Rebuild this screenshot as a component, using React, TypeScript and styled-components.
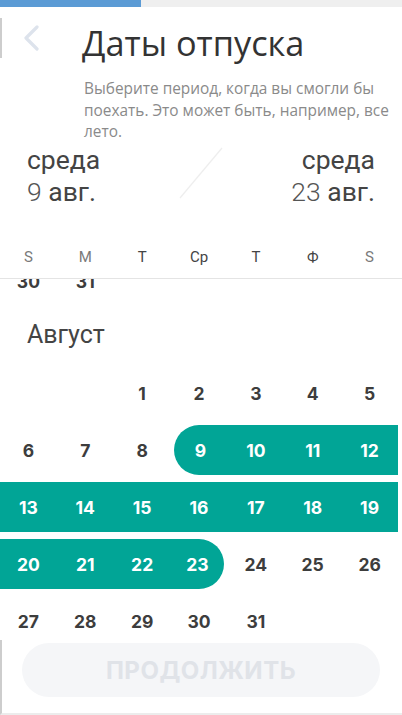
import React, { useLayoutEffect, useRef } from "react";
import styled, { createGlobalStyle, css } from "styled-components";

const GlobalStyle = createGlobalStyle`
  html, body { margin: 0; padding: 0; background: #fff; }
  body { font-family: "Roboto", "Noto Sans", sans-serif; }
  * { box-sizing: border-box; }
`;

const TEAL = "#01a596";

const Screen = styled.div`
  width: 402px;
  height: 715px;
  display: flex;
  flex-direction: column;
  overflow: hidden;
  background: #fff;
`;

const Progress = styled.div`
  height: 7px;
  background: #efefef;
  flex-shrink: 0;
`;

const ProgressFill = styled.div`
  height: 100%;
  background: #5b9bd5;
`;

const Header = styled.header`
  margin-top: 11px;
  height: 40px;
  display: flex;
  align-items: center;
  border-left: 2px solid #cdcdcd;
  flex-shrink: 0;
`;

const BackButton = styled.button`
  border: 0;
  background: none;
  padding: 0;
  margin: 0 0 0 19px;
  width: 20px;
  height: 26px;
  display: flex;
  align-items: center;
  justify-content: center;
  cursor: pointer;
`;

const Title = styled.h1`
  margin: 0 0 0 41px;
  font-family: "Open Sans", sans-serif;
  font-weight: 400;
  font-size: 34.3px;
  line-height: 40px;
  color: #333;
  position: relative;
  top: 5px;
  white-space: nowrap;
`;

const Subtitle = styled.p`
  margin: 20px 0 0 0;
  padding: 0 2px 0 84px;
  font-family: "Open Sans", sans-serif;
  font-size: 15.4px;
  line-height: 21.5px;
  color: #8a8a8a;
  flex-shrink: 0;
`;

const DateSummary = styled.div`
  margin-top: 1px;
  padding: 0 27px;
  display: grid;
  grid-template-columns: 1fr auto 1fr;
  align-items: center;
  flex-shrink: 0;
`;

const DateBlock = styled.div<{ $align: "left" | "right" }>`
  display: flex;
  flex-direction: column;
  align-items: ${(p) => (p.$align === "left" ? "flex-start" : "flex-end")};
`;

const DayName = styled.span`
  font-family: "Roboto", sans-serif;
  font-size: 26.5px;
  line-height: 32px;
  color: #444;
`;

const DateText = styled.span`
  font-family: "Roboto", sans-serif;
  font-size: 26.5px;
  line-height: 32px;
  color: #444;
`;

const DateNum = styled.span`
  font-weight: 300;
  color: #555;
`;

const Slash = styled.svg`
  margin-top: -6px;
`;

const WeekHeader = styled.div`
  margin-top: 28px;
  height: 43px;
  padding-right: 4px;
  display: grid;
  grid-template-columns: repeat(7, 1fr);
  align-items: center;
  border-bottom: 1px solid #e4e4e4;
  flex-shrink: 0;
`;

const WeekLabel = styled.span<{ $light?: boolean }>`
  text-align: center;
  font-family: "Roboto", sans-serif;
  font-size: 15px;
  color: ${(p) => (p.$light ? "#7a7a7a" : "#444")};
  padding-top: 1px;
`;

const Viewport = styled.div`
  flex: 1;
  overflow: hidden;
  padding-right: 4px;
`;

const MonthTitle = styled.h2`
  margin: 0;
  height: 55px;
  padding: 12px 0 0 27px;
  font-family: "Roboto", sans-serif;
  font-weight: 400;
  font-size: 25px;
  line-height: 26px;
  color: #444;
`;

const WeekRow = styled.div`
  display: grid;
  grid-template-columns: repeat(7, 1fr);
  height: 57px;
`;

const Cell = styled.div`
  display: flex;
  align-items: center;
`;

const Day = styled.span<{ $inRange: boolean; $start: boolean; $end: boolean }>`
  flex: 1;
  height: 50px;
  display: flex;
  align-items: center;
  justify-content: center;
  font-family: "Inter", sans-serif;
  font-weight: 700;
  font-size: 17.5px;
  color: #3d3d3d;
  ${(p) =>
    p.$inRange &&
    css`
      background: ${TEAL};
      color: #fff;
    `}
  ${(p) =>
    p.$start &&
    css`
      margin-left: 3px;
      border-top-left-radius: 25px;
      border-bottom-left-radius: 25px;
    `}
  ${(p) =>
    p.$end &&
    css`
      margin-right: 3px;
      border-top-right-radius: 25px;
      border-bottom-right-radius: 25px;
    `}
`;

const Footer = styled.footer`
  height: 75px;
  padding: 3px 22px 0 20px;
  border-left: 2px solid #cdcdcd;
  border-bottom: 2px solid #ececec;
  flex-shrink: 0;
  background: #fff;
`;

const ContinueButton = styled.button`
  width: 358px;
  height: 54px;
  border: 0;
  border-radius: 27px;
  background: #f5f6f8;
  color: #e0e3e8;
  font-family: "Inter", sans-serif;
  font-weight: 700;
  font-size: 24px;
  letter-spacing: 0.5px;
  cursor: default;
`;

type DayCell = number | null;

const weekdays: { label: string; light?: boolean }[] = [
  { label: "S", light: true },
  { label: "M", light: true },
  { label: "T" },
  { label: "Ср" },
  { label: "T" },
  { label: "Ф" },
  { label: "S", light: true },
];

const julyTail: DayCell[][] = [[30, 31, null, null, null, null, null]];

const august: DayCell[][] = [
  [null, null, 1, 2, 3, 4, 5],
  [6, 7, 8, 9, 10, 11, 12],
  [13, 14, 15, 16, 17, 18, 19],
  [20, 21, 22, 23, 24, 25, 26],
  [27, 28, 29, 30, 31, null, null],
];

const RANGE_START = 9;
const RANGE_END = 23;

function Week({ days, selectable }: { days: DayCell[]; selectable: boolean }) {
  return (
    <WeekRow>
      {days.map((d, i) => {
        const inRange = selectable && d !== null && d >= RANGE_START && d <= RANGE_END;
        return (
          <Cell key={i}>
            <Day
              $inRange={inRange}
              $start={inRange && d === RANGE_START}
              $end={inRange && d === RANGE_END}
            >
              {d ?? ""}
            </Day>
          </Cell>
        );
      })}
    </WeekRow>
  );
}

export default function App() {
  const viewportRef = useRef<HTMLDivElement>(null);

  useLayoutEffect(() => {
    if (viewportRef.current) viewportRef.current.scrollTop = 26;
  }, []);

  return (
    <>
      <GlobalStyle />
      <Screen>
        <Progress>
          <ProgressFill style={{ width: "35%" }} />
        </Progress>
        <Header>
          <BackButton aria-label="Назад">
            <svg width="18" height="26" viewBox="0 0 18 26" fill="none">
              <path
                d="M15 2 L4 13 L15 24"
                stroke="#dde3ec"
                strokeWidth="3.2"
                strokeLinecap="round"
                strokeLinejoin="round"
              />
            </svg>
          </BackButton>
          <Title>Даты отпуска</Title>
        </Header>
        <Subtitle>
          Выберите период, когда вы смогли бы поехать. Это может быть, например, все лето.
        </Subtitle>
        <DateSummary>
          <DateBlock $align="left">
            <DayName>среда</DayName>
            <DateText>
              <DateNum>9</DateNum> авг.
            </DateText>
          </DateBlock>
          <Slash width="44" height="52" viewBox="0 0 44 52">
            <line x1="1" y1="51" x2="43" y2="1" stroke="#eeeeee" strokeWidth="1.2" />
          </Slash>
          <DateBlock $align="right">
            <DayName>среда</DayName>
            <DateText>
              <DateNum>23</DateNum> авг.
            </DateText>
          </DateBlock>
        </DateSummary>
        <WeekHeader>
          {weekdays.map((w, i) => (
            <WeekLabel key={i} $light={w.light}>
              {w.label}
            </WeekLabel>
          ))}
        </WeekHeader>
        <Viewport ref={viewportRef}>
          {julyTail.map((w, i) => (
            <Week key={`j${i}`} days={w} selectable={false} />
          ))}
          <MonthTitle>Август</MonthTitle>
          {august.map((w, i) => (
            <Week key={`a${i}`} days={w} selectable />
          ))}
        </Viewport>
        <Footer>
          <ContinueButton disabled>ПРОДОЛЖИТЬ</ContinueButton>
        </Footer>
      </Screen>
    </>
  );
}
